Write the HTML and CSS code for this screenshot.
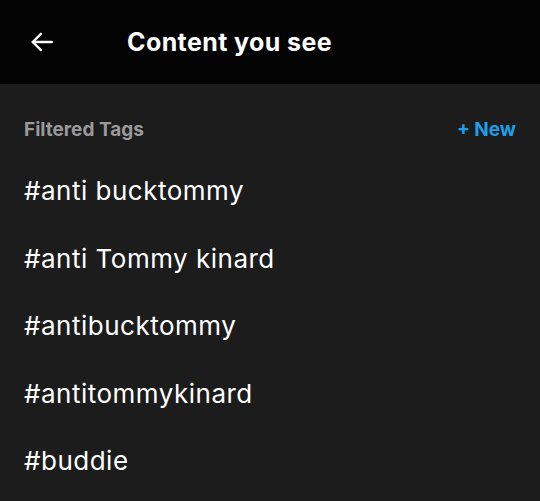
FILE: index.html
```html
<!DOCTYPE html>
<html lang="en">
<head>
    <meta charset="UTF-8">
    <meta name="viewport" content="width=device-width, initial-scale=1.0">
    <title>Content you see</title>
    <link rel="stylesheet" href="styles.css">
</head>
<body>

    <div class="header">
        <button class="back" aria-label="Back">
            <svg width="26" height="26" viewBox="0 0 24 24" fill="none" stroke="#fff" stroke-width="2.2" stroke-linecap="round" stroke-linejoin="round">
                <path d="M21 12H3.5"/>
                <path d="M11 4.5L3.5 12L11 19.5"/>
            </svg>
        </button>
        <h1>Content you see</h1>
    </div>

    <div class="section">
        <div class="section-head">
            <span class="section-title">Filtered Tags</span>
            <span class="new">+ New</span>
        </div>
        <ul class="tags">
            <li>#anti bucktommy</li>
            <li>#anti Tommy kinard</li>
            <li>#antibucktommy</li>
            <li>#antitommykinard</li>
            <li>#buddie</li>
        </ul>
    </div>

</body>
</html>
```

FILE: styles.css
```css
* {
    margin: 0;
    padding: 0;
    box-sizing: border-box;
    font-family: Inter, "Liberation Sans", sans-serif;
}
body {
    background: #1c1c1c;
    color: #fff;
    width: 540px;
    height: 501px;
    overflow: hidden;
}
.header {
    background: #030303;
    height: 84px;
    display: flex;
    align-items: center;
    padding-left: 29px;
}
.back {
    background: none;
    border: none;
    width: 26px;
    height: 26px;
    display: flex;
    margin-right: 72px;
}
.header h1 {
    font-size: 25px;
    font-weight: 700;
    letter-spacing: 0.4px;
    color: #fff;
}
.section {
    padding: 0 24px;
}
.section-head {
    display: flex;
    justify-content: space-between;
    align-items: center;
    height: 90px;
}
.section-title {
    font-size: 19px;
    font-weight: 700;
    color: #9a9a9a;
}
.new {
    font-size: 19px;
    font-weight: 700;
    color: #1e9ee6;
}
.tags {
    list-style: none;
}
.tags li {
    font-size: 26px;
    letter-spacing: 0.5px;
    height: 67.5px;
    line-height: 67.5px;
    margin-top: -17px;
    margin-bottom: 17px;
}
```
